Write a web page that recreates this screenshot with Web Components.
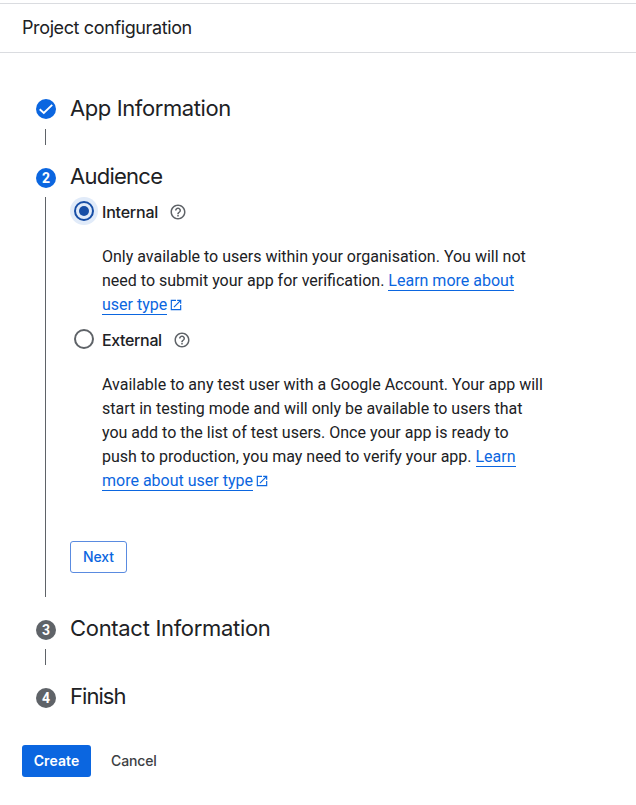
<!DOCTYPE html>
<html lang="en-GB">
<head>
<meta charset="utf-8">
<title>Project configuration</title>
<style>
body{margin:0;background:#fff;color:#202124;font:16px/24px Roboto,sans-serif}
</style>
</head>
<body>
<project-page></project-page>
<script>
const define = (name, html) => {
  const t = document.createElement('template');
  t.innerHTML = html;
  customElements.define(name, class extends HTMLElement {
    constructor() {
      super();
      this.attachShadow({mode: 'open'}).append(t.content.cloneNode(true));
    }
  });
};

define('page-header', `
<style>
:host{display:flex;align-items:center;height:48px;margin-top:3px;padding-left:22px;border:solid #dadce0;border-width:1px 0;font:400 18px/24px Inter,sans-serif;letter-spacing:-.38px}
</style><slot></slot>`);

define('step-item', `
<style>
:host{display:block}
header{display:flex;height:36px;gap:14px}
.badge{display:flex;align-items:center;justify-content:center;width:20px;height:20px;margin-top:9px;border-radius:50%;background:#5f6368;color:#fff;font:700 14px/20px Roboto,sans-serif}
:host([state=done]) .badge,:host([state=active]) .badge{background:#0b66e0}
:host([state=done]) .badge{margin-top:8px}
h2{margin:0;font:400 22px/34px Inter,sans-serif;letter-spacing:var(--track,-.25px)}
.body{display:flex;gap:24px;margin:2px 0 14px 9px}
.line{width:1px;min-height:16px;background:#5f6368}
:host([last]) .body{display:none}
</style>
<header><div class="badge"><slot name="badge"></slot></div><h2><slot name="title"></slot></h2></header>
<div class="body"><div class="line"></div><div><slot></slot></div></div>`);

define('check-icon', `
<style>:host,svg{display:block}</style>
<svg width="20" height="20" viewBox="0 0 20 20"><path d="M3.700 10.200 7.800 14 16.200 5.900" fill="none" stroke="#fff" stroke-width="1.9"/></svg>`);

define('help-icon', `
<style>:host,svg{display:block}</style>
<svg width="18" height="18" viewBox="0 0 24 24" fill="#5f6368"><path d="M11 18h2v-2h-2v2zm1-16C6.48 2 2 6.48 2 12s4.48 10 10 10 10-4.48 10-10S17.520 2 12 2zm0 18c-4.410 0-8-3.590-8-8s3.590-8 8-8 8 3.590 8 8-3.590 8-8 8zm0-14c-2.210 0-4 1.790-4 4h2c0-1.100.9-2 2-2s2 .9 2 2c0 2-3 1.750-3 5h2c0-2.250 3-2.500 3-5 0-2.210-1.790-4-4-4z"/></svg>`);

define('doc-link', `
<style>
:host{display:inline;color:#0b66e0}
a{border-bottom:1px solid #0b66e0}
svg{margin-left:2px;vertical-align:-2px}
</style><a><slot></slot></a><svg width="14" height="14" viewBox="0 0 24 24" fill="#0b66e0"><path d="M19 19H5V5h7V3H3v18h18v-9h-2v7zM14 3v2h3.590l-9.830 9.830 1.410 1.410L19 6.410V10h2V3h-7z"/></svg>`);

define('radio-option', `
<style>
:host{display:grid;grid-template-columns:28px 441px;column-gap:4px}
svg{display:block;margin-top:-3px}
.halo,.dot{display:none}
.ring{fill:none;stroke:#5f6368;stroke-width:2}
:host([checked]) .halo,:host([checked]) .dot{display:block}
:host([checked]) .ring{stroke:#174ea6}
.head{display:flex;align-items:center;gap:11px;height:24px;font:500 16px/24px Inter,sans-serif;letter-spacing:var(--track,-.2px)}
p{grid-column:2;margin:20px 0 0;white-space:nowrap}
</style>
<svg width="28" height="28"><circle class="halo" cx="14" cy="14" r="14" fill="#e1ebf9"/><circle class="ring" cx="14" cy="14" r="9"/><circle class="dot" cx="14" cy="14" r="5" fill="#174ea6"/></svg>
<div class="head"><span><slot name="label"></slot></span><help-icon></help-icon></div>
<p><slot></slot></p>`);

define('ui-button', `
<style>
:host{display:inline-flex;box-sizing:border-box;align-items:center;justify-content:center;height:32px;border-radius:3px;font:500 14px/20px Inter,sans-serif;letter-spacing:var(--track,0)}
:host([kind=outline]){width:57px;border:1px solid #5a8be0;color:#0b66e0}
:host([kind=primary]){width:69px;background:#0b66e0;color:#fff;font-weight:600}
:host([kind=text]){color:#3c4043}
</style><slot></slot>`);

define('project-page', `
<style>
:host{display:block}
main{padding:38px 0 0 36px}
.options{display:flex;flex-direction:column;gap:11px;margin-top:3px}
.next{display:flex;margin:48px 0 24px}
footer{display:flex;gap:20px;padding:30px 0 0 22px}
</style>
<page-header>Project configuration</page-header>
<main>
<step-item state="done" style="--track:-.4px"><check-icon slot="badge"></check-icon><span slot="title">App Information</span></step-item>
<step-item state="active" style="--track:-.74px"><span slot="badge">2</span><span slot="title">Audience</span>
<div class="options">
<radio-option checked style="--track:-.2px"><span slot="label">Internal</span>Only available to users within your organisation. You will not<br>need to submit your app for verification. <doc-link>Learn more about<br>user type</doc-link></radio-option>
<radio-option style="--track:-.36px"><span slot="label">External</span>Available to any test user with a Google Account. Your app will<br>start in testing mode and will only be available to users that<br>you add to the list of test users. Once your app is ready to<br>push to production, you may need to verify your app. <doc-link>Learn<br>more about user type</doc-link></radio-option>
</div>
<div class="next"><ui-button kind="outline" style="--track:-.1px">Next</ui-button></div>
</step-item>
<step-item style="--track:-.31px"><span slot="badge">3</span><span slot="title">Contact Information</span></step-item>
<step-item last style="--track:-.95px"><span slot="badge">4</span><span slot="title">Finish</span></step-item>
</main>
<footer><ui-button kind="primary" style="--track:.1px">Create</ui-button><ui-button kind="text" style="--track:-.12px">Cancel</ui-button></footer>`);
</script>
</body>
</html>
